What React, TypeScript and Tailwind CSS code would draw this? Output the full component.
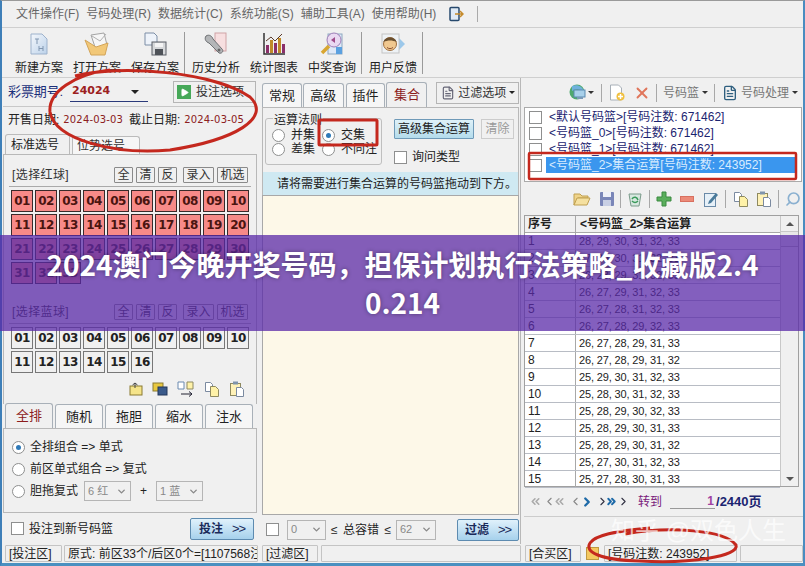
import React from "react";
import { ChevronDown, ChevronLeft, ChevronRight, ChevronsLeft, ChevronsRight, Play, X, Search, FileText } from "lucide-react";

const UI = '"Liberation Sans","Noto Sans CJK SC",sans-serif';

const menus = ["文件操作(F)", "号码处理(R)", "数据统计(C)", "系统功能(S)", "辅助工具(A)", "使用帮助(H)"];
const rows = [
  "28, 29, 30, 31, 32, 33", "27, 29, 30, 31, 32, 33", "26, 28, 29, 31, 32, 33", "26, 27, 29, 31, 32, 33", "26, 27, 28, 31, 32, 33",
  "26, 27, 28, 29, 32, 33", "26, 27, 28, 29, 31, 33", "26, 27, 28, 29, 31, 32", "25, 29, 30, 31, 32, 33", "25, 28, 30, 31, 32, 33",
  "25, 28, 29, 30, 32, 33", "25, 28, 29, 30, 31, 33", "25, 28, 29, 30, 31, 32", "25, 27, 30, 31, 32, 33", "25, 27, 28, 30, 31, 33",
];

function pad(n: number) {
  return n < 10 ? "0" + n : "" + n;
}

function ToolItem({ label, children }: { label: string; children: React.ReactNode }) {
  return (
    <div className="flex flex-col items-center w-[58px] shrink-0">
      <div className="h-[26px] w-[30px] flex items-center justify-center">{children}</div>
      <span className="text-[12px] leading-[14px] mt-[4px] text-[#222] whitespace-nowrap">{label}</span>
    </div>
  );
}

function Radio({ on }: { on?: boolean }) {
  return (
    <span className="inline-flex w-[13px] h-[13px] rounded-full border border-[#8e8f8f] bg-white items-center justify-center shrink-0">
      {on && <span className="w-[5px] h-[5px] rounded-full bg-[#2f7ab8]" />}
    </span>
  );
}

function Check() {
  return <span className="inline-block w-[13px] h-[13px] border border-[#8e8f8f] bg-white shrink-0" />;
}

function SmallBtn({ label, w }: { label: string; w: string }) {
  return (
    <span className={`${w} h-[16px] border border-[#8a8a8a] rounded-[1px] bg-[#f0f0f0] flex items-center justify-center text-[12px] leading-none text-[#333]`}>
      {label}
    </span>
  );
}

function BallHeader({ label }: { label: string }) {
  return (
    <>
      <div className="flex items-center h-[16px] pl-[8px] pr-[8px]">
        <span className="text-[#333] tracking-[0.4px]">{label}</span>
        <div className="ml-auto flex gap-[3px]">
          <SmallBtn label="全" w="w-[19px]" />
          <SmallBtn label="清" w="w-[19px]" />
          <SmallBtn label="反" w="w-[19px]" />
          <SmallBtn label="录入" w="w-[31px] ml-[3px]" />
          <SmallBtn label="机选" w="w-[31px]" />
        </div>
      </div>
      <div className="h-px bg-[#aaa] mx-[5px] mt-[3px] mb-[3px]" />
    </>
  );
}

function BallGrid({ count, red }: { count: number; red?: boolean }) {
  return (
    <div className="grid grid-cols-[repeat(10,22px)] gap-[2px] ml-[7px]">
      {Array.from({ length: count }, (_, i) => (
        <span
          key={i}
          className={`h-[22px] flex items-center justify-center text-[12px] font-bold font-['DejaVu_Sans'] tracking-[-0.6px] border ${
            red ? "bg-[#f78a88] border-[#3a2a2a] text-[#4a1510]" : "bg-[#f0f0f0] border-[#777] text-[#222]"
          }`}
        >
          {pad(i + 1)}
        </span>
      ))}
    </div>
  );
}

function Tab({ label, active, w }: { label: string; active?: boolean; w: string }) {
  return (
    <span
      className={`${w} flex items-center justify-center text-[13px] border border-b-0 border-[#a8b0b8] rounded-t-[3px] ${
        active ? "bg-[#f0f0f0] h-[25px] text-[#8c1c1c]" : "bg-[#f6f6f6] h-[24px] text-[#222]"
      }`}
    >
      {label}
    </span>
  );
}

function Cell({ className, children }: { className: string; children?: React.ReactNode }) {
  return <div className={`border border-[#c4c4c4] rounded-[1px] h-[17px] flex items-center px-[3px] overflow-hidden whitespace-nowrap shrink-0 ${className}`}>{children}</div>;
}

function BlueBtn({ label, w }: { label: string; w: string }) {
  return (
    <span className={`${w} h-[22px] rounded-[2px] border border-[#5d8bb0] bg-linear-to-b from-[#e0f1fb] to-[#a6d1ec] flex items-center justify-center font-bold text-[#1a2a5a] text-[12px] gap-[9px] shrink-0`}>
      {label}
      <span className="font-normal text-[13px] tracking-[-1px]">&gt;&gt;</span>
    </span>
  );
}

function Select({ label, w }: { label: string; w: string }) {
  return (
    <span className={`${w} h-[20px] border border-[#b5b5b5] flex items-center justify-between px-[3px] text-[#888] text-[11px] shrink-0 whitespace-nowrap`}>
      {label}
      <ChevronDown className="w-[11px] h-[11px]" strokeWidth={3} />
    </span>
  );
}

function Sep({ h = "h-[18px]" }: { h?: string }) {
  return <span className={`block w-px ${h} bg-[#a8a8a8] shrink-0`} />;
}

function DocSmall({ fill = "#fff2a8", stroke = "#8f8a60" }: { fill?: string; stroke?: string }) {
  return (
    <svg width="16" height="16" viewBox="0 0 16 16" className="shrink-0">
      <path d="M1.5 1.5h5l2 2v7h-7z" fill="#fff" stroke="#7b8aa0" />
      <path d="M6.5 5.5h5l3 3v7h-8z" fill={fill} stroke={stroke} />
    </svg>
  );
}

function PasteSmall() {
  return (
    <svg width="16" height="16" viewBox="0 0 16 16" className="shrink-0">
      <rect x="1.5" y="2.5" width="10" height="12" fill="#fff2b8" stroke="#8f8a60" />
      <rect x="4" y="0.5" width="5" height="3" fill="#7f94ac" />
      <path d="M7.5 6.5h5l2 2v7h-7z" fill="#fff" stroke="#7b8aa0" />
    </svg>
  );
}

export default function App() {
  return (
    <div className="relative w-[805px] h-[566px] overflow-hidden bg-[#f0f0f0] text-[12px] text-[#222]" style={{ fontFamily: UI }}>
      <div className="flex flex-col h-full border-l-2 border-l-[#3e7fb8] border-r-2 border-r-[#4a8cc0] border-t border-t-[#9a9a9a] border-b-[3px] border-b-[#4a90c0]">
        {/* Menu bar */}
        <div className="h-[27px] flex items-center pl-[14px] border-b border-[#cfcfcf] text-[#666] gap-[7px] shrink-0">
          {menus.map((m) => (
            <span key={m} className="text-[12px] whitespace-nowrap">{m}</span>
          ))}
          <svg width="16" height="16" viewBox="0 0 16 16" className="ml-[5px] shrink-0">
            <rect x="2" y="1.5" width="9" height="13" rx="1" fill="#dfeaf5" stroke="#27496d" strokeWidth="1.5" />
            <path d="M7 8h8M12 5l3 3-3 3" fill="none" stroke="#c58a2a" strokeWidth="1.5" />
          </svg>
          <span className="w-px h-[16px] bg-[#aaa] ml-[6px]" />
        </div>

        {/* Toolbar */}
        <div className="h-[50px] flex items-center pl-[8px] border-b border-[#cfcfcf] shrink-0">
          <ToolItem label="新建方案">
            <svg width="18" height="22" viewBox="0 0 18 22"><defs><linearGradient id="nw" x1="0" y1="0" x2="1" y2="1"><stop offset="0" stopColor="#f4f7fb" /><stop offset="1" stopColor="#bcd2ea" /></linearGradient></defs><path d="M1 1h11l5 5v15H1z" fill="url(#nw)" stroke="#9db2cc" /><path d="M5 6h4M7 6v5M9 13v5M13 13v5M9 15.500h4" fill="none" stroke="#8096b0" /></svg>
          </ToolItem>
          <ToolItem label="打开方案">
            <svg width="26" height="24" viewBox="0 0 26 24"><path d="M7 3l13-2 3 12-11 5z" fill="#f6f6f6" stroke="#a4a4a4" /><path d="M8 4l8 5 6-7" fill="none" stroke="#b0b0b0" /><path d="M1 8l6 15h14l3-12-12 4z" fill="#f2c878" stroke="#d2a458" /></svg>
          </ToolItem>
          <ToolItem label="保存方案">
            <svg width="24" height="24" viewBox="0 0 24 24"><path d="M2 1h9l3 3v9H2z" fill="#eef3fa" stroke="#7c8ea6" /><rect x="9" y="10" width="14" height="13" fill="#d6d8da" stroke="#5a5f66" /><rect x="12" y="11" width="8" height="4" fill="#f4f4f4" /><rect x="12" y="17" width="8" height="6" fill="#4e5258" /></svg>
          </ToolItem>
          <span className="w-px h-[42px] bg-[#9a9a9a] mr-[2px] shrink-0" />
          <ToolItem label="历史分析">
            <svg width="26" height="24" viewBox="0 0 26 24"><rect x="12" y="1" width="11" height="18" fill="#f7dfe0" stroke="#cfa3a6" /><path d="M3 4c3-2 6 0 7 3l9 10c2 2 0 5-3 4L6 11C3 10 1 7 3 4z" fill="#b4b6b8" stroke="#6d7073" /><circle cx="16" cy="18" r="1.500" fill="#666" /></svg>
          </ToolItem>
          <ToolItem label="统计图表">
            <svg width="24" height="24" viewBox="0 0 24 24"><path d="M2 1v21h21" fill="none" stroke="#333" strokeWidth="1.500" /><rect x="4" y="13" width="3" height="8" fill="#8a2f6a" /><rect x="8" y="8" width="3" height="13" fill="#c08a2a" /><rect x="12" y="11" width="3" height="10" fill="#8a2f6a" /><rect x="16" y="6" width="3" height="15" fill="#c08a2a" /><rect x="20" y="12" width="3" height="9" fill="#8a2f6a" /><path d="M4 9l5-4 4 4 7-7" fill="none" stroke="#5a3a2a" /></svg>
          </ToolItem>
          <ToolItem label="中奖查询">
            <svg width="25" height="25" viewBox="0 0 25 25"><rect x="8" y="3" width="14" height="20" fill="#dfe9f8" stroke="#8ea8c0" /><circle cx="14" cy="9" r="7" fill="#ead9f2" stroke="#a080b8" /><path d="M11 9l4-3v6z" fill="#a04a8a" /><path d="M9 15l-7 7" stroke="#d8a632" strokeWidth="3.500" /><rect x="16" y="16" width="6" height="7" fill="#5aa0e0" /></svg>
          </ToolItem>
          <span className="w-px h-[42px] bg-[#9a9a9a] mr-[2px] shrink-0" />
          <ToolItem label="用户反馈">
            <svg width="26" height="24" viewBox="0 0 26 24"><path d="M16 3l9 9-9 9z" fill="#9cc8ea" /><rect x="2" y="2" width="17" height="19" fill="#eef2f5" stroke="#c4c4c4" /><circle cx="10" cy="12" r="6.500" fill="#f0c890" stroke="#a07040" /><path d="M3.500 10c1-6 12-6 13 0-4-2-9-2-13 0z" fill="#6a5030" /><path d="M7 15.500c2 1.500 4 1.500 6 0" fill="none" stroke="#8a5030" /></svg>
          </ToolItem>
          <span className="w-px h-[42px] bg-[#9a9a9a] shrink-0" />
        </div>

        {/* Main columns */}
        <div className="flex flex-1 min-h-0 pl-[1px]">
          {/* Left column */}
          <div className="w-[254px] shrink-0 flex flex-col">
            <div className="h-[29px] flex items-center pl-[5px] shrink-0 border-b border-[#c8c8c8] whitespace-nowrap">
              <span className="text-[#1b2f7a] text-[13px] tracking-[-0.1px] w-[53px] shrink-0 overflow-visible">彩票期号:</span>
              <div className="ml-[9px] w-[78px] h-[20px] border-b border-[#2b3a7a] flex items-center justify-between pl-[2px] pr-[9px] shrink-0">
                <span className="font-['DejaVu_Sans'] font-bold text-[11px] text-[#9c2020]">24024</span>
                <span className="w-0 h-0 border-x-[4px] border-x-transparent border-t-[4px] border-t-[#222]" />
              </div>
              <div className="ml-[25px] w-[83px] h-[22px] border border-[#b5b5b5] flex items-center pl-[3px] gap-[5px] text-[#333] shrink-0">
                <span className="w-[14px] h-[14px] bg-[#46a858] flex items-center justify-center shrink-0">
                  <Play className="w-[9px] h-[9px] text-white fill-white" />
                </span>
                <span>投注选项</span>
              </div>
            </div>
            <div className="h-[25px] flex items-center pl-[5px] gap-[4px] shrink-0 whitespace-nowrap">
              <span>开售日期:</span>
              <span className="text-[10px] font-['DejaVu_Sans'] tracking-[0.15px] text-[#8c2020]">2024-03-03</span>
              <span className="ml-[2px]">截止日期:</span>
              <span className="text-[10px] font-['DejaVu_Sans'] tracking-[0.15px] text-[#8c2020]">2024-03-05</span>
            </div>
            <div className="h-[22px] flex items-end pl-[2px] shrink-0 gap-[2px]">
              <span className="h-[20px] w-[65px] border border-b-0 border-[#bbb] rounded-t-[3px] flex items-center pl-[5px] text-[12px]">标准选号</span>
              <span className="h-[18px] w-[68px] border border-b-0 border-[#bbb] rounded-t-[3px] bg-[#f6f6f6] flex items-center pl-[4px] text-[#333]">位势选号</span>
            </div>
            <div className="h-[250px] border border-[#b8b8b8] border-b-0 shrink-0 flex flex-col pt-[12px]">
              <BallHeader label="[选择红球]" />
              <BallGrid count={33} red />
              <div className="mt-[20px]">
                <BallHeader label="[选择蓝球]" />
              </div>
              <BallGrid count={16} />
              <div className="flex-1 flex items-center pl-[125px] gap-[9px]">
                <svg width="14" height="14" viewBox="0 0 14 14" className="shrink-0"><rect x="1" y="4" width="12" height="9" fill="#f5e48a" stroke="#8a7a30" /><path d="M6 6V1M6 1L3.500 3M6 1l2.500 2" fill="none" stroke="#444" /></svg>
                <svg width="16" height="14" viewBox="0 0 16 14" className="shrink-0"><rect x="1" y="1" width="10" height="8" fill="#e8c840" stroke="#8a7a30" /><rect x="6" y="5" width="9" height="8" fill="#3a5a8a" stroke="#22375a" /></svg>
                <svg width="18" height="16" viewBox="0 0 18 16" className="shrink-0"><path d="M1 1h6v7H1z" fill="#fff" stroke="#6a8ab0" /><path d="M10 1h6v7h-6z" fill="#fff2a8" stroke="#8f8a60" /><path d="M4 13h11M12 10.500l3 2.500-3 2.500" fill="none" stroke="#223" /></svg>
                <DocSmall />
                <PasteSmall />
              </div>
            </div>
            <div className="h-[24px] flex items-end shrink-0 gap-[2px] pl-[2px]">
              <Tab label="全排" active w="w-[48px]" />
              <Tab label="随机" w="w-[48px]" />
              <Tab label="拖胆" w="w-[48px]" />
              <Tab label="缩水" w="w-[48px]" />
              <Tab label="注水" w="w-[48px]" />
            </div>
            <div className="h-[85px] border border-[#b8b8b8] shrink-0 flex flex-col pl-[8px] pt-[11px] gap-[8px]">
              <div className="flex items-center gap-[5px] h-[14px] whitespace-nowrap"><Radio on /><span>全排组合 =&gt; 单式</span></div>
              <div className="flex items-center gap-[5px] h-[14px] whitespace-nowrap"><Radio /><span>前区单式组合 =&gt; 复式</span></div>
              <div className="flex items-center gap-[5px] h-[14px] whitespace-nowrap">
                <Radio /><span>胆拖复式</span>
                <Select label="6 红" w="w-[47px] ml-[1px]" />
                <span className="mx-[4px]">+</span>
                <Select label="1 蓝" w="w-[47px]" />
              </div>
            </div>
            <div className="flex-1 flex items-center pl-[8px] pr-[3px] gap-[5px]">
              <Check /><span className="whitespace-nowrap">投注到新号码篮</span>
              <BlueBtn label="投注" w="ml-auto w-[64px]" />
            </div>
          </div>

          {/* Middle column */}
          <div className="w-[263px] shrink-0 flex flex-col pl-[5px] pr-[1px]">
            <div className="h-[29px] flex items-end gap-[1px] shrink-0">
              <Tab label="常规" w="w-[40px]" />
              <Tab label="高级" w="w-[41px]" />
              <Tab label="插件" w="w-[40px] ml-[1px]" />
              <Tab label="集合" active w="w-[41px]" />
              <div className="ml-[8px] self-center w-[83px] h-[22px] border border-[#b5b5b5] flex items-center pl-[4px] gap-[3px] text-[#333] whitespace-nowrap">
                <FileText className="w-[14px] h-[14px] text-[#667] shrink-0" />过滤选项
                <span className="w-0 h-0 border-x-[3px] border-x-transparent border-t-[3px] border-t-[#222]" />
              </div>
            </div>
            <div className="h-[65px] border border-[#b8b8b8] border-b-0 shrink-0 flex pl-[2px] pt-[10px]">
              <div className="w-[117px] h-[47px] border border-[#bfbfbf] rounded-[3px] relative shrink-0">
                <span className="absolute -top-[6px] left-[7px] bg-[#f0f0f0] px-[1px] leading-[14px] whitespace-nowrap">运算法则</span>
                <div className="grid grid-cols-[42px_auto] justify-start gap-x-[8px] pl-[6px] pt-[9px] leading-[14px] whitespace-nowrap">
                  <span className="flex items-center gap-[6px]"><Radio />并集</span>
                  <span className="flex items-center gap-[6px]"><Radio on />交集</span>
                  <span className="flex items-center gap-[6px]"><Radio />差集</span>
                  <span className="flex items-center gap-[6px]"><Radio />不同注</span>
                </div>
              </div>
              <div className="ml-[12px] flex flex-col">
                <div className="flex gap-[7px] mt-[1px]">
                  <span className="w-[80px] h-[20px] border border-[#6f9ab8] rounded-[1px] bg-linear-to-b from-[#dff1f8] to-[#b4dcec] flex items-center justify-center whitespace-nowrap">高级集合运算</span>
                  <span className="w-[33px] h-[20px] border border-[#ccc] flex items-center justify-center text-[#999]">清除</span>
                </div>
                <div className="flex items-center gap-[5px] mt-[9px] whitespace-nowrap"><Check />询问类型</div>
              </div>
            </div>
            <div className="h-[23px] bg-[#cfe9f2] border-x border-[#b8b8b8] flex items-center pl-[14px] shrink-0 whitespace-nowrap text-[#222]">请将需要进行集合运算的号码篮拖动到下方。</div>
            <div className="h-[320px] bg-[#fdf8e8] border border-[#a8a8a8] shrink-0" />
            <div className="flex items-center flex-1 pl-[4px] whitespace-nowrap">
              <Check />
              <Select label="0" w="w-[39px] ml-[8px]" />
              <span className="ml-[5px] w-[60px] flex justify-between shrink-0"><span>≤</span><span>总容错</span><span>≤</span></span>
              <Select label="62" w="w-[40px] ml-[5px]" />
              <BlueBtn label="过滤" w="ml-[21px] w-[62px]" />
            </div>
          </div>

          {/* Right column */}
          <div className="flex-1 min-w-0 flex flex-col pl-[3px] border-l border-[#b8b8b8]">
            <div className="h-[29px] flex items-center pl-[45px] shrink-0 text-[#777] whitespace-nowrap">
              <svg width="17" height="17" viewBox="0 0 17 17" className="shrink-0"><circle cx="8" cy="8" r="7.500" fill="#4fa96e" /><path d="M3 2c5-2 11 0 12 6-4-3-8-3-12-1z" fill="#6fb2dc" /><rect x="5" y="6" width="11" height="7" fill="#a8d0ea" stroke="#5a8ab0" /><rect x="8" y="13" width="6" height="2" fill="#7a9ab8" /></svg>
              <span className="w-0 h-0 border-x-[3px] border-x-transparent border-t-[3px] border-t-[#333] ml-[2px] mr-[7px]" />
              <Sep />
              <svg width="16" height="17" viewBox="0 0 16 17" className="ml-[7px] shrink-0"><path d="M1.500 1h8l3 3v12h-11z" fill="#fff" stroke="#a8b0b8" /><circle cx="11.500" cy="12.500" r="4" fill="#f0c040" /><path d="M9 12.500h5M11.500 10v5" stroke="#fff" strokeWidth="1.500" /></svg>
              <X className="w-[18px] h-[18px] text-[#e0765c] ml-[8px] shrink-0" strokeWidth={2.5} />
              <span className="ml-[5px]"><Sep /></span>
              <span className="ml-[6px]">号码篮</span>
              <span className="w-0 h-0 border-x-[3px] border-x-transparent border-t-[3px] border-t-[#333] ml-[3px] mr-[6px]" />
              <Sep />
              <FileText className="w-[16px] h-[16px] text-[#2f5f7f] ml-[7px] shrink-0" />
              <span className="ml-[3px]">号码处理</span>
              <span className="w-0 h-0 border-x-[3px] border-x-transparent border-t-[3px] border-t-[#333] ml-[3px]" />
            </div>
            <div className="h-[75px] mr-[1px] bg-white border border-[#aaa] shrink-0 pt-[1px] pl-[4px] text-[#1b2470] overflow-hidden">
              {["<默认号码篮>[号码注数: 671462]", "<号码篮_0>[号码注数: 671462]", "<号码篮_1>[号码注数: 671462]"].map((t) => (
                <div key={t} className="h-[16px] flex items-center gap-[7px] whitespace-nowrap"><Check /><span>{t}</span></div>
              ))}
              <div className="h-[16px] flex items-center gap-[4px] whitespace-nowrap">
                <Check /><span className="bg-[#3a96ee] text-[#d8ecff] h-[16px] flex items-center pl-[3px] w-[251px]">&lt;号码篮_2&gt;集合运算[号码注数: 243952]</span>
              </div>
            </div>
            <div className="h-[33px] flex items-center pl-[49px] shrink-0">
              <svg width="18" height="15" viewBox="0 0 18 15" className="shrink-0"><path d="M1 3h6l2 2h6v2H5L1 14z" fill="#f0d48a" stroke="#c0a050" /><path d="M4 7h13l-3 7H1z" fill="#f5e0a0" stroke="#c0a050" /></svg>
              <svg width="16" height="16" viewBox="0 0 16 16" className="ml-[8px] shrink-0"><rect x="1" y="1" width="14" height="14" rx="1" fill="#7a86b8" /><rect x="4" y="1" width="8" height="5" fill="#eef0f8" /><rect x="4" y="9" width="8" height="6" fill="#c8cfe4" /></svg>
              <span className="ml-[5px]"><Sep /></span>
              <svg width="16" height="16" viewBox="0 0 16 16" className="ml-[6px] shrink-0"><path d="M2 3h12l-2 12H4z" fill="#d8e8e0" stroke="#7a9a8a" /><path d="M5 8c2-3 5-2 6 1M11 10c-2 2-4 2-6 0" fill="none" stroke="#3a9a5a" strokeWidth="1.500" /></svg>
              <span className="ml-[6px]"><Sep /></span>
              <svg width="16" height="16" viewBox="0 0 16 16" className="ml-[6px] shrink-0"><path d="M6 1h4v5h5v4h-5v5H6v-5H1V6h5z" fill="#5aae5c" stroke="#3a8a40" /></svg>
              <svg width="14" height="6" viewBox="0 0 14 6" className="ml-[8px] shrink-0"><rect x="0.500" y="0.500" width="13" height="5" fill="#ec8a78" stroke="#d87060" /></svg>
              <svg width="16" height="16" viewBox="0 0 16 16" className="ml-[9px] shrink-0"><rect x="1.500" y="2.500" width="11" height="13" fill="#e6f0f8" stroke="#6a8aa8" /><path d="M6 10l7-8 2 2-7 8-3 1z" fill="#4a7a9a" /></svg>
              <span className="ml-[6px]"><Sep /></span>
              <span className="ml-[7px]"><DocSmall /></span>
              <span className="ml-[7px]"><PasteSmall /></span>
              <span className="ml-[6px]"><Sep /></span>
              <Search className="w-[16px] h-[16px] text-[#8ab0d0] ml-[6px] -scale-x-100 shrink-0" strokeWidth={2.5} />
            </div>
            <div className="flex h-[272px] w-[275px] border border-[#a0a0a0] bg-white shrink-0">
              <div className="flex-1 min-w-0 flex flex-col">
                <div className="h-[17px] flex bg-[#f0f0f0] border-b border-[#a8a8a8] font-bold text-[12px] shrink-0 whitespace-nowrap">
                  <span className="w-[51px] border-r border-[#a8a8a8] pl-[3px] leading-[16px] shrink-0">序号</span>
                  <span className="pl-[4px] leading-[16px]">&lt;号码篮_2&gt;集合运算</span>
                </div>
                {rows.map((r, i) => (
                  <div key={i} className="h-[17px] flex border-b border-[#b8bcc4] text-[11px] tracking-[-0.15px] shrink-0 whitespace-nowrap">
                    <span className="w-[51px] border-r border-[#a8a8a8] pl-[3px] leading-[16px] shrink-0 text-[12px]">{i + 1}</span>
                    <span className="pl-[3px] leading-[16px]">{r}</span>
                  </div>
                ))}
              </div>
              <div className="w-[18px] border-l border-[#c8c8c8] bg-[#f0f0f0] flex flex-col items-center shrink-0">
                <span className="h-[16px] w-full flex items-center justify-center border-b border-[#c8c8c8]">
                  <span className="w-0 h-0 border-x-[4px] border-x-transparent border-b-[4px] border-b-[#555]" />
                </span>
                <span className="h-[15px] w-full border-b border-[#b0b0b0] bg-[#e8e8e8]" />
                <span className="mt-auto mb-[5px] w-0 h-0 border-x-[4px] border-x-transparent border-t-[4px] border-t-[#555]" />
              </div>
            </div>
            <div className="h-[30px] flex items-center pl-[5px] shrink-0 text-[#888] border-b border-[#ccc] whitespace-nowrap">
              <ChevronsLeft className="w-[13px] h-[13px] text-[#aaa] shrink-0" strokeWidth={3} />
              <ChevronLeft className="w-[13px] h-[13px] text-[#888] ml-[1px] shrink-0" />
              <ChevronsLeft className="w-[13px] h-[13px] text-[#aaa] -ml-[3px] shrink-0" strokeWidth={3} />
              <ChevronLeft className="w-[13px] h-[13px] text-[#888] ml-[3px] shrink-0" />
              <ChevronRight className="w-[14px] h-[14px] text-[#1e6aa8] -ml-[2px] shrink-0" strokeWidth={4} />
              <ChevronRight className="w-[13px] h-[13px] text-[#334] ml-[2px] shrink-0" />
              <ChevronsRight className="w-[13px] h-[13px] text-[#1e6aa8] -ml-[4px] shrink-0" strokeWidth={3.5} />
              <ChevronRight className="w-[13px] h-[13px] text-[#334] -ml-[1px] shrink-0" />
              <span className="text-[#7a1a7a] ml-[8px]">转到</span>
              <span className="w-[45px] border-b border-[#999] text-right text-[#a040a0] font-bold ml-[8px] leading-[14px] pr-[1px] shrink-0">1</span>
              <span className="font-bold text-[13px] text-[#1b2470] ml-[1px]">/2440页</span>
            </div>
          </div>
        </div>

        {/* Status bar */}
        <div className="h-[19px] flex items-center shrink-0 text-[12px] pl-[3px]">
          <Cell className="w-[57px]">[投注区]</Cell>
          <Cell className="w-[194px] ml-[2px]">原式: 前区33个/后区0个=[1107568注]</Cell>
          <Cell className="w-[56px] ml-[4px]">[过滤区]</Cell>
          <Cell className="w-[200px] ml-[3px]" />
          <Cell className="w-[56px] ml-[4px]">[合买区]</Cell>
          <span className="w-[13px] h-[13px] bg-[#f4c860] border border-[#c09a40] shrink-0 ml-[5px]" />
          <Cell className="w-[133px] ml-[5px]">[号码注数: 243952]</Cell>
          <Cell className="flex-1 min-w-0 ml-[3px]" />
        </div>
      </div>

      {/* Red hand-drawn annotations */}
      <svg className="absolute inset-0 pointer-events-none" width="805" height="566" viewBox="0 0 805 566" fill="none" stroke="#c4281e">
        <path d="M75 76C120 64 215 72 250 97C272 118 235 140 170 150C115 155 55 140 50 112C48 92 75 74 110 70" strokeWidth="3" />
        <rect x="319" y="120" width="58" height="25" rx="1" strokeWidth="3" />
        <rect x="529" y="153" width="267" height="26" rx="1" strokeWidth="2.5" />
        <path d="M625 534C670 526 725 530 736 545C740 556 690 564 640 561C600 560 584 552 590 543C595 535 615 531 650 528" strokeWidth="3" />
      </svg>

      {/* Watermark */}
      <span className="absolute left-[611px] top-[516px] text-[24px] leading-[30px] text-white/70 whitespace-nowrap">知乎 @双色人生</span>

      {/* Purple title banner */}
      <div className="absolute left-0 right-0 top-[235px] h-[96px] bg-[#5a2aa8]/75 flex items-center justify-center">
        <h1 className="text-white text-[28px] leading-[38px] font-bold text-center whitespace-nowrap [text-shadow:0_0_4px_rgba(0,0,0,0.4)]" style={{ fontFamily: '"Noto Sans CJK SC","Noto Sans",sans-serif' }}>
          2024澳门今晚开奖号码，担保计划执行法策略_收藏版2.4
          <br />
          0.214
        </h1>
      </div>
    </div>
  );
}
